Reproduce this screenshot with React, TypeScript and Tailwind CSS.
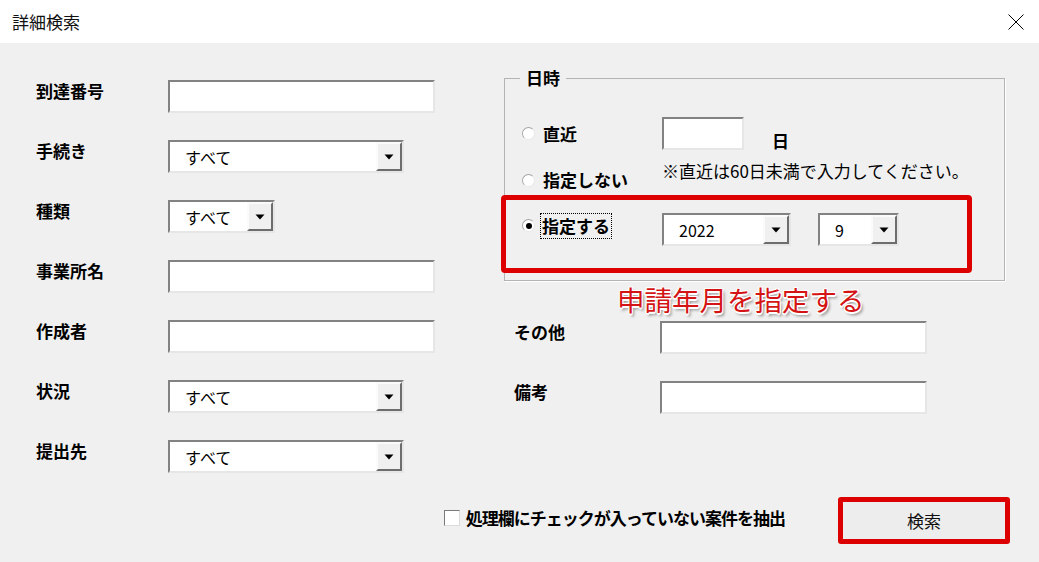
import React from 'react'

const sunken =
  'bg-white border-2 border-t-[#828282] border-l-[#828282] border-b-[#e6e6e6] border-r-[#e6e6e6]'

const TextBox = ({ width }: { width: string }) => (
  <div className={`${sunken} ${width} h-[33px] shrink-0`} />
)

const DropButton = () => (
  <div className="w-[26px] h-full shrink-0 bg-[#f0f0f0] border-2 border-t-[#fbfbfb] border-l-[#fbfbfb] border-b-[#6d6d6d] border-r-[#6d6d6d] flex items-center justify-center">
    <svg width="10" height="6" viewBox="0 0 10 6">
      <path d="M0.5 0.5 L9.5 0.5 L5 5.5 Z" fill="#000" />
    </svg>
  </div>
)

const ComboBox = ({ width, value }: { width: string; value: string }) => (
  <div className={`${sunken} ${width} h-[33px] shrink-0 flex items-stretch`}>
    <div className="flex-1 flex items-center pl-[15px] text-[16px] leading-none text-black">
      {value}
    </div>
    <DropButton />
  </div>
)

const Radio = ({ checked }: { checked?: boolean }) => (
  <span className="w-[13px] h-[13px] rounded-full bg-white border border-[#a6a6a6] border-b-[#e8e8e8] border-r-[#e8e8e8] flex items-center justify-center shrink-0">
    {checked && <span className="w-[6px] h-[6px] rounded-full bg-black" />}
  </span>
)

const leftRows: { label: string; kind: 'text' | 'combo'; width: string }[] = [
  { label: '到達番号', kind: 'text', width: 'w-[267px]' },
  { label: '手続き', kind: 'combo', width: 'w-[236px]' },
  { label: '種類', kind: 'combo', width: 'w-[107px]' },
  { label: '事業所名', kind: 'text', width: 'w-[267px]' },
  { label: '作成者', kind: 'text', width: 'w-[267px]' },
  { label: '状況', kind: 'combo', width: 'w-[236px]' },
  { label: '提出先', kind: 'combo', width: 'w-[236px]' },
]

export default function App() {
  return (
    <div className="w-[1039px] h-[562px] overflow-hidden bg-[#f0f0f0] font-['Noto_Sans_CJK_JP','Noto_Sans',sans-serif] text-black flex flex-col">
      {/* title bar */}
      <div className="h-[43px] shrink-0 bg-white flex items-center justify-between pl-[12px] pr-[14px]">
        <span className="text-[17px] leading-none text-[#111]">詳細検索</span>
        <svg width="16" height="16" viewBox="0 0 16 16" className="mr-[1px]">
          <path d="M0.5 0.5 L15.5 15.5 M15.5 0.5 L0.5 15.5" stroke="#000" strokeWidth="1" />
        </svg>
      </div>

      <div className="flex pt-[35px]">
        {/* left column */}
        <div className="w-[504px] shrink-0 pl-[36px] pt-[2px] flex flex-col gap-[27px]">
          {leftRows.map((row) => (
            <div key={row.label} className="flex items-start h-[33px]">
              <div className="w-[132px] shrink-0 text-[17px] leading-[22px] font-bold">{row.label}</div>
              {row.kind === 'text' ? (
                <TextBox width={row.width} />
              ) : (
                <ComboBox width={row.width} value="すべて" />
              )}
            </div>
          ))}
        </div>

        {/* right column */}
        <div className="relative w-[501px] shrink-0 flex flex-col">
          <div className="relative h-[203px] border border-[#b4b4b4] shadow-[1px_1px_0_#fff]">
            <span className="absolute left-[15px] top-[-12px] px-[6px] bg-[#f0f0f0] text-[17px] leading-[22px] font-bold">
              日時
            </span>

            <div className="pt-[38px] flex flex-col">
              {/* 直近 */}
              <div className="flex h-[33px]">
                <div className="w-[157px] shrink-0 pl-[17px] flex items-center gap-[8px]">
                  <Radio />
                  <span className="text-[17px] leading-[22px] font-bold">直近</span>
                </div>
                <div className="flex items-end">
                  <TextBox width="w-[82px]" />
                  <span className="ml-[28px] mb-[-2px] text-[17px] leading-[22px] font-bold">日</span>
                </div>
              </div>

              {/* 指定しない */}
              <div className="flex h-[63px]">
                <div className="w-[157px] shrink-0 pl-[17px] pt-[19px] flex items-start gap-[8px]">
                  <span className="mt-[5px]">
                    <Radio />
                  </span>
                  <span className="text-[17px] leading-[22px] font-bold">指定しない</span>
                </div>
                <div className="pt-[10px] text-[17px] leading-[22px]">
                  ※直近は60日未満で入力してください。
                </div>
              </div>

              {/* 指定する */}
              <div className="flex h-[33px]">
                <div className="w-[157px] shrink-0 pl-[17px] flex items-start gap-[5px]">
                  <span className="mt-[6px]">
                    <Radio checked />
                  </span>
                  <span className="border border-dotted border-black px-[1px] text-[17px] leading-[24px] font-bold">
                    指定する
                  </span>
                </div>
                <div className="flex gap-[27px]">
                  <ComboBox width="w-[129px]" value="2022" />
                  <ComboBox width="w-[81px]" value="9" />
                </div>
              </div>
            </div>

            {/* highlight around the year/month row */}
            <div className="absolute left-[-4px] top-[116px] w-[471px] h-[78px] border-[5px] border-[#dc0000] rounded-[4px] pointer-events-none" />
          </div>

          <div className="h-[40px] pl-[113px] text-[27.5px] leading-[36px] text-[#d41414] [text-shadow:-1px_-1px_0_#fff,1px_-1px_0_#fff,-1px_1px_0_#fff,1px_1px_0_#fff,0_2px_0_#fff,2px_3px_3px_rgba(0,0,0,0.45)]">
            申請年月を指定する
          </div>

          <div className="flex flex-col gap-[27px]">
            {['その他', '備考'].map((label) => (
              <div key={label} className="flex items-start h-[33px] pl-[10px]">
                <div className="w-[146px] shrink-0 text-[17px] leading-[22px] font-bold">{label}</div>
                <TextBox width="w-[267px]" />
              </div>
            ))}
          </div>
        </div>
      </div>

      {/* footer */}
      <div className="mt-[24px] flex items-center justify-end pr-[29px]">
        <label className="flex items-center gap-[6px] mr-[53px] mb-[6px]">
          <span className="w-[16px] h-[16px] bg-white border border-t-[#7a7a7a] border-l-[#7a7a7a] border-b-[#dcdcdc] border-r-[#dcdcdc]" />
          <span className="text-[17px] leading-[22px] font-bold tracking-[-1px]">
            処理欄にチェックが入っていない案件を抽出
          </span>
        </label>
        <button className="w-[172px] h-[47px] bg-[#ededed] border-[5px] border-[#dc0000] rounded-[3px] text-[17px] leading-none text-[#111]">
          検索
        </button>
      </div>
    </div>
  )
}
